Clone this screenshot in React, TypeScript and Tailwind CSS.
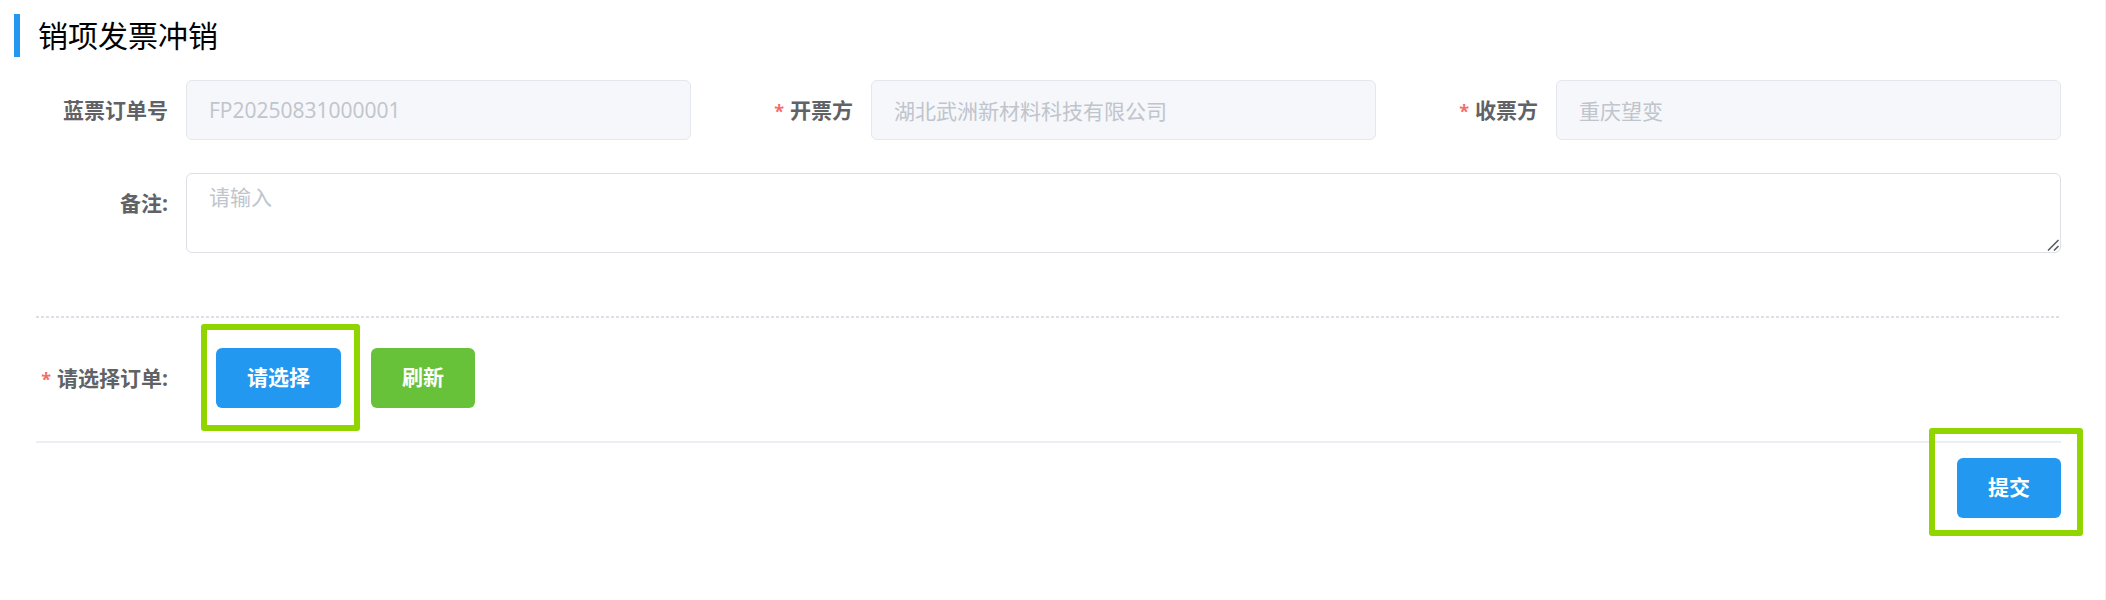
import type { ReactNode } from 'react';

const buttonBase =
  'h-[60px] rounded-[6px] px-[31px] pb-[2px] text-[21px] leading-[28px] font-bold text-white';

function Label({ htmlFor, required, children }: { htmlFor: string; required?: boolean; children: ReactNode }) {
  return (
    <label
      htmlFor={htmlFor}
      className="w-[180px] shrink-0 pr-[18px] text-right text-[21px] leading-[60px] font-bold whitespace-nowrap text-[#606266]"
    >
      {required && <span className="mr-[6px] text-[18px] leading-none text-[#f56c6c]">*</span>}
      {children}
    </label>
  );
}

function ReadonlyField({ id, label, value, required }: { id: string; label: string; value: string; required?: boolean }) {
  return (
    <div className="flex">
      <Label htmlFor={id} required={required}>
        {label}
      </Label>
      <input
        id={id}
        disabled
        defaultValue={value}
        className="h-[60px] min-w-0 flex-1 rounded-[6px] border border-[#e4e7ed] bg-[#f5f7fa] px-[22px] text-[21px] text-[#c0c4cc]"
      />
    </div>
  );
}

export default function App() {
  return (
    <main className="min-h-screen border-r border-[#f0f0f2] bg-white pt-[14px] pr-[44px] pl-[6px] font-['Open_Sans','Noto_Sans_CJK_SC',sans-serif]">
      <h1 className="ml-[8px] border-l-[6px] border-[#2398f0] pl-[18px] text-[30px] leading-[43px] font-normal text-black">
        销项发票冲销
      </h1>

      <form onSubmit={(e) => e.preventDefault()}>
        <div className="mt-[23px] grid grid-cols-3">
          <ReadonlyField id="order-no" label="蓝票订单号" value="FP20250831000001" />
          <ReadonlyField id="issuer" label="开票方" value="湖北武洲新材料科技有限公司" required />
          <ReadonlyField id="receiver" label="收票方" value="重庆望变" required />
        </div>

        <div className="mt-[33px] flex items-start">
          <Label htmlFor="remark">备注:</Label>
          <div className="relative flex min-w-0 flex-1">
            <textarea
              id="remark"
              placeholder="请输入"
              className="h-[80px] min-w-0 flex-1 resize-none rounded-[6px] border border-[#dcdfe6] bg-white px-[22px] py-[7px] text-[21px] leading-[32px] placeholder:text-[#c0c4cc]"
            />
            <svg
              aria-hidden="true"
              viewBox="0 0 12 12"
              className="pointer-events-none absolute right-[2px] bottom-[2px] h-[12px] w-[12px] text-[#555555]"
              fill="none"
              stroke="currentColor"
              strokeWidth="1.5"
            >
              <path d="M1 11.5 11.5 1M7 11.5 11.5 7" />
            </svg>
          </div>
        </div>

        <div className="mt-[63px] ml-[30px] h-[2px] bg-[repeating-linear-gradient(to_right,#dcdfe6_0_3px,transparent_3px_5px)]" />

        <div className="mt-[30px] flex">
          <Label htmlFor="choose-order" required>
            请选择订单:
          </Label>
          <div className="ml-[30px] flex gap-[30px]">
            <div className="relative">
              <button id="choose-order" type="button" className={`${buttonBase} bg-[#2398f0]`}>
                请选择
              </button>
              <div className="pointer-events-none absolute -top-[24px] -right-[19px] -bottom-[23px] -left-[15px] rounded-[3px] border-[6px] border-[#90d400]" />
            </div>
            <button type="button" className={`${buttonBase} bg-[#67c23a]`}>
              刷新
            </button>
          </div>
        </div>

        <div className="mt-[33px] ml-[30px] h-[2px] bg-[#ebeef5]" />

        <div className="mt-[15px] flex justify-end">
          <div className="relative">
            <button type="submit" className={`${buttonBase} bg-[#2398f0]`}>
              提交
            </button>
            <div className="pointer-events-none absolute -top-[30px] -right-[22px] -bottom-[18px] -left-[28px] rounded-[3px] border-[6px] border-[#90d400]" />
          </div>
        </div>
      </form>
    </main>
  );
}
